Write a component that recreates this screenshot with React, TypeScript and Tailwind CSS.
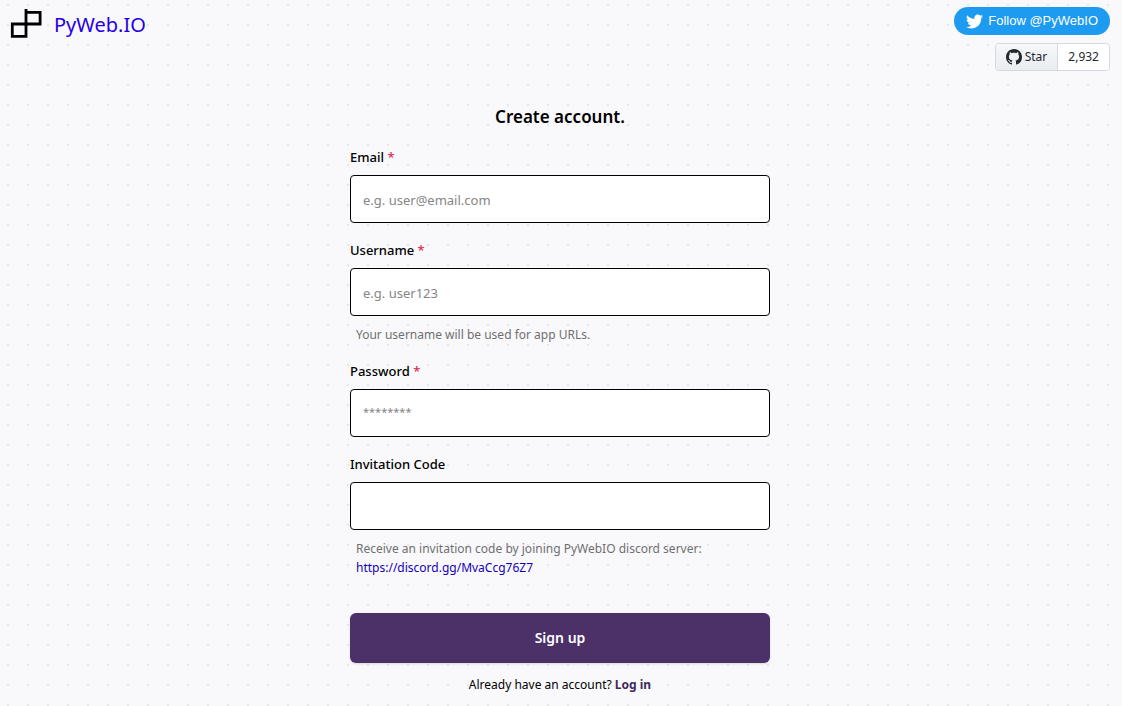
import type { InputHTMLAttributes, ReactNode } from "react";
import { FaTwitter } from "react-icons/fa";

type FieldProps = InputHTMLAttributes<HTMLInputElement> & {
  id: string;
  label: string;
  hint?: ReactNode;
};

function Logo() {
  return (
    <svg width="32" height="32" viewBox="0 0 32 32" fill="none" stroke="#000" strokeWidth="2.8" aria-hidden="true">
      <path d="M2.3 15H16V27.3H2.3Z" />
      <path d="M16 0V15H30.1V3.4H16" />
    </svg>
  );
}

function GithubMark() {
  return (
    <svg width="16" height="16" viewBox="0 0 16 16" fill="#24292f" aria-hidden="true">
      <path d="M8 0C3.58 0 0 3.58 0 8c0 3.54 2.29 6.53 5.47 7.59.4.07.55-.17.55-.38 0-.19-.01-.82-.01-1.49-2.01.37-2.53-.49-2.69-.94-.09-.23-.48-.94-.82-1.13-.28-.15-.68-.52-.01-.53.63-.01 1.08.58 1.23.82.72 1.21 1.87.87 2.33.66.07-.52.28-.87.51-1.07-1.78-.2-3.64-.89-3.64-3.95 0-.87.31-1.59.82-2.15-.08-.2-.36-1.02.08-2.12 0 0 .67-.21 2.2.82.64-.18 1.32-.27 2-.27s1.36.09 2 .27c1.53-1.04 2.2-.82 2.2-.82.44 1.1.16 1.92.08 2.12.51.56.82 1.27.82 2.15 0 3.07-1.87 3.75-3.65 3.95.29.25.54.73.54 1.48 0 1.07-.01 1.93-.01 2.2 0 .21.15.46.55.38A8.01 8.01 0 0 0 16 8c0-4.42-3.58-8-8-8Z" />
    </svg>
  );
}

function Field({ id, label, hint, required, type, ...input }: FieldProps) {
  return (
    <div>
      <label htmlFor={id} className="block text-[13px] leading-5 font-medium text-black">
        {label}
        {required && <span className="text-[#e0284f]"> *</span>}
      </label>
      <input
        id={id}
        type={type}
        required={required}
        className={`mt-2 block h-12 w-full rounded border border-black bg-white px-3 text-black outline-none placeholder:text-[#858585] focus:ring-2 focus:ring-[#4c3068]/40 ${
          type === "password" ? "pb-1 text-[11px]" : "pt-0.5 text-[13px]"
        }`}
        {...input}
      />
      {hint && <p className="mt-[9px] px-1.5 text-xs leading-[19px] text-[#6f6f6f]">{hint}</p>}
    </div>
  );
}

export default function App() {
  return (
    <div className="min-h-screen bg-[#f9f9fc] bg-[radial-gradient(circle_at_8px_5px,#e6e6ea_1px,transparent_1px)] bg-[length:20px_20px] font-['Noto_Sans',sans-serif]">
      <header className="flex items-start justify-between pt-[7px] pr-3 pl-2.5">
        <a href="#home" className="flex items-center gap-3 pt-0.5 text-xl leading-8 text-[#2600e8]">
          <Logo />
          PyWeb.IO
        </a>
        <div className="flex flex-col items-end gap-2">
          <a
            href="#twitter"
            className="flex h-7 items-center gap-[5px] rounded-full bg-[#1d9bf0] px-3 font-['Liberation_Sans',sans-serif] text-[13px] font-medium text-white"
          >
            <FaTwitter size={17} aria-hidden="true" />
            Follow @PyWebIO
          </a>
          <div className="flex h-7 overflow-hidden rounded-sm border border-[#d5d8dc] text-xs text-[#24292f]">
            <a href="#star" className="flex items-center gap-[3px] bg-linear-to-b from-[#f6f8fa] to-[#e9ecf1] px-2.5">
              <GithubMark />
              Star
            </a>
            <a href="#stargazers" className="flex items-center border-l border-[#d5d8dc] bg-white px-2.5">
              2,932
            </a>
          </div>
        </div>
      </header>

      <main className="mx-auto w-full max-w-[422px] pt-8 pr-0.5 pb-2.5">
        <h1 className="text-center text-[17px] leading-7 font-semibold text-black">Create account.</h1>
        <form className="mt-4 flex flex-col" onSubmit={(e) => e.preventDefault()}>
          <div className="flex flex-col gap-[17px]">
            <Field id="email" label="Email" type="email" placeholder="e.g. user@email.com" required />
            <Field
              id="username"
              label="Username"
              type="text"
              placeholder="e.g. user123"
              hint="Your username will be used for app URLs."
              required
            />
            <Field id="password" label="Password" type="password" placeholder="********" required />
            <Field
              id="invitation"
              label="Invitation Code"
              type="text"
              hint={
                <>
                  Receive an invitation code by joining PyWebIO discord server:{" "}
                  <a href="#discord" className="block text-[#1400b8]">
                    https://discord.gg/MvaCcg76Z7
                  </a>
                </>
              }
            />
          </div>
          <button
            type="submit"
            className="mt-9 h-[50px] w-full rounded-md bg-[#4c3068] text-sm font-semibold text-white shadow-sm"
          >
            Sign up
          </button>
        </form>
        <p className="mt-3 text-center text-xs leading-5 text-black">
          Already have an account?{" "}
          <a href="#login" className="font-bold text-[#3f2a5c]">
            Log in
          </a>
        </p>
      </main>
    </div>
  );
}
